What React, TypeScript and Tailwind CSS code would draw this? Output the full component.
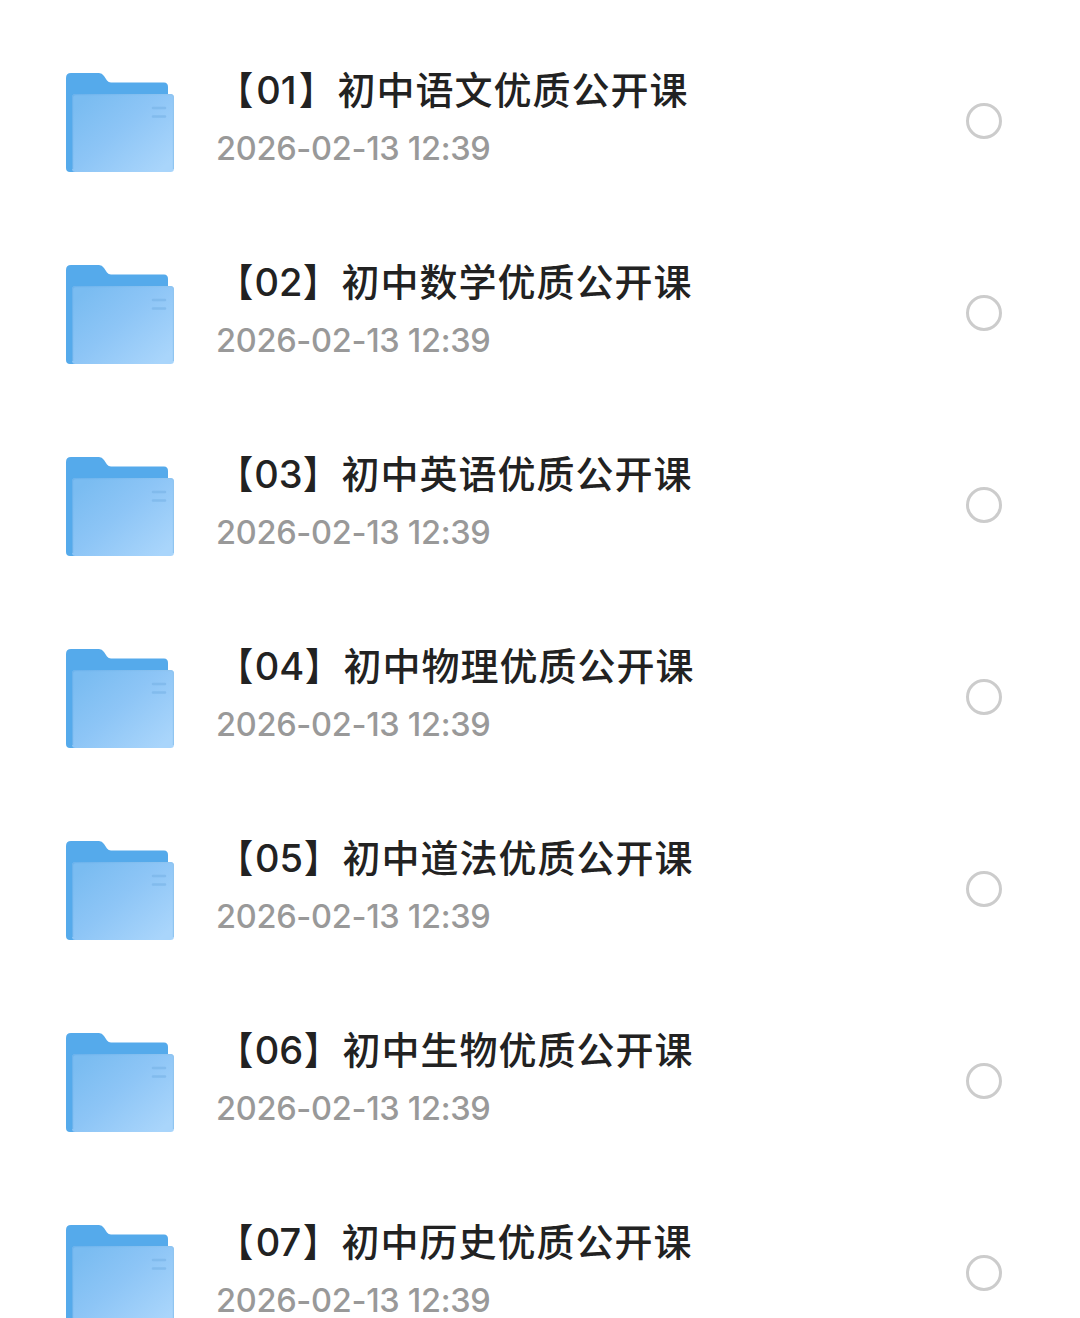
const rows = [
  { no: '01', subject: '语文', width: 'w-[45px]' },
  { no: '02', subject: '数学', width: 'w-[49px]' },
  { no: '03', subject: '英语', width: 'w-[49px]' },
  { no: '04', subject: '物理', width: 'w-[51px]' },
  { no: '05', subject: '道法', width: 'w-[50px]' },
  { no: '06', subject: '生物', width: 'w-[50px]' },
  { no: '07', subject: '历史', width: 'w-[49px]' },
];

function FolderIcon() {
  return (
    <svg width="108" height="100" viewBox="0 0 108 100" className="mt-[72px] shrink-0">
      <defs>
        <linearGradient id="front" gradientUnits="userSpaceOnUse" x1="20" y1="26" x2="88" y2="104">
          <stop offset="0" stopColor="#7abcf1" />
          <stop offset="0.45" stopColor="#8dc5f6" />
          <stop offset="1" stopColor="#a9d5fb" />
        </linearGradient>
        <linearGradient id="edge" x1="0" y1="0" x2="1" y2="0">
          <stop offset="0" stopColor="#6bb2ec" />
          <stop offset="1" stopColor="#90c5f1" />
        </linearGradient>
      </defs>
      <path d="M0 6Q0 1 5 1H33Q36 1 38 4L41 8.500Q42.500 10.500 45 10.500H98Q102 10.500 102 15V100H4Q0 100 0 96Z" fill="#55aaeb" />
      <rect x="6" y="22" width="102" height="78" rx="3.500" fill="url(#front)" />
      <path d="M6.600 97V25.500Q6.600 22.600 9.500 22.600H104Q107.400 22.600 107.400 26V97" fill="none" stroke="url(#edge)" strokeWidth="1.200" />
      <path d="M87 36H99M87 44.500H99" stroke="#7ab5e8" strokeWidth="2.500" strokeLinecap="round" opacity="0.65" />
    </svg>
  );
}

export default function App() {
  return (
    <main className="h-[1318px] w-[1080px] overflow-hidden bg-white font-['Inter','Noto_Sans_CJK_SC',sans-serif]">
      {rows.map((row) => (
        <div key={row.no} className="flex h-48 items-start pl-[66px]">
          <FolderIcon />
          <div className="ml-[41px] flex-1 pt-[60px]">
            <div className="flex h-[56px] items-center whitespace-nowrap font-['Noto_Sans_CJK_SC',sans-serif] text-[38px] font-medium leading-[56px] tracking-[1px] text-[#222]">
              <span className="w-[39px] origin-[37px_50%] scale-x-90 font-bold">【</span>
              <span className={`${row.width} flex justify-center pt-[3px] font-['Inter',sans-serif] tracking-[0px]`}>{row.no}</span>
              <span className="w-[39px] origin-[2px_50%] scale-x-90 font-bold">】</span>
              <span className="-ml-[0.5px]">初中{row.subject}优质公开课</span>
            </div>
            <div className="flex h-[60px] items-center whitespace-nowrap pl-px pt-[6px] text-[32.500px] font-[450] leading-[60px] tracking-[-0.3px] text-[#999]">2026-02-13 12:39</div>
          </div>
          <div className="mr-[78px] mt-[103px] size-9 rounded-full border-[3px] border-[#ccc]" />
        </div>
      ))}
    </main>
  );
}
